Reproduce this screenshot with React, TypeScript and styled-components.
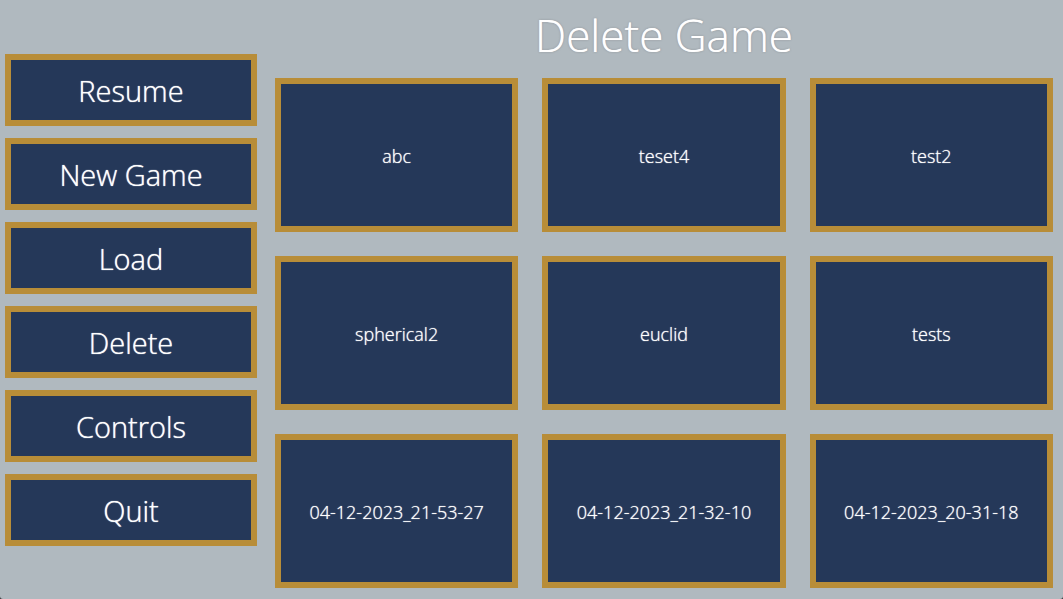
import React from "react";
import styled, { createGlobalStyle } from "styled-components";

const GlobalStyle = createGlobalStyle`
  *, *::before, *::after { box-sizing: border-box; }
  html { background: #3a3c40; }
  body { margin: 0; }
  body, button {
    font-family: "Segoe UI", "Open Sans", "Noto Sans", sans-serif;
    font-weight: 300;
  }
`;

const Screen = styled.div`
  display: flex;
  gap: 18px;
  min-height: 100vh;
  padding: 0 10px 0 5px;
  background: #b0b9bf;
  border-radius: 0 0 3px 3px;
`;

const Menu = styled.nav`
  display: flex;
  flex-direction: column;
  justify-content: center;
  gap: 12px;
  flex: 0 0 252px;
`;

const GameButton = styled.button`
  border: 6px solid #b88d38;
  border-radius: 0;
  background: #253859;
  color: #fff;
  text-shadow: 0 0 1px #fff;
  cursor: pointer;
`;

const MenuButton = styled(GameButton)`
  height: 72px;
  padding: 2px 0 0;
  font-size: 29px;
  line-height: 40px;
`;

const SaveButton = styled(GameButton)`
  min-width: 0;
  padding: 2px 0 0;
  font-size: 18px;
  line-height: 24px;
`;

const Content = styled.main`
  display: flex;
  flex: 1;
  flex-direction: column;
  min-width: 0;
  padding-bottom: 11px;
`;

const Title = styled.h1`
  margin: 0;
  padding: 3px 0 11px;
  color: #fff;
  font-size: 44px;
  font-weight: 300;
  line-height: 64px;
  text-align: center;
  text-shadow: 0 0 1px #fff, 0 0 2px #6c7276;
`;

const SaveGrid = styled.div`
  display: grid;
  flex: 1;
  grid-template-columns: repeat(3, minmax(0, 1fr));
  grid-auto-rows: minmax(120px, 1fr);
  gap: 24px;
`;

const menuItems = ["Resume", "New Game", "Load", "Delete", "Controls", "Quit"];

const saves = [
  "abc",
  "teset4",
  "test2",
  "spherical2",
  "euclid",
  "tests",
  "04-12-2023_21-53-27",
  "04-12-2023_21-32-10",
  "04-12-2023_20-31-18",
];

export default function App() {
  return (
    <>
      <GlobalStyle />
      <Screen>
        <Menu aria-label="Game menu">
          {menuItems.map((item) => (
            <MenuButton key={item} type="button">{item}</MenuButton>
          ))}
        </Menu>
        <Content>
          <Title>Delete Game</Title>
          <SaveGrid>
            {saves.map((save) => (
              <SaveButton key={save} type="button">{save}</SaveButton>
            ))}
          </SaveGrid>
        </Content>
      </Screen>
    </>
  );
}
